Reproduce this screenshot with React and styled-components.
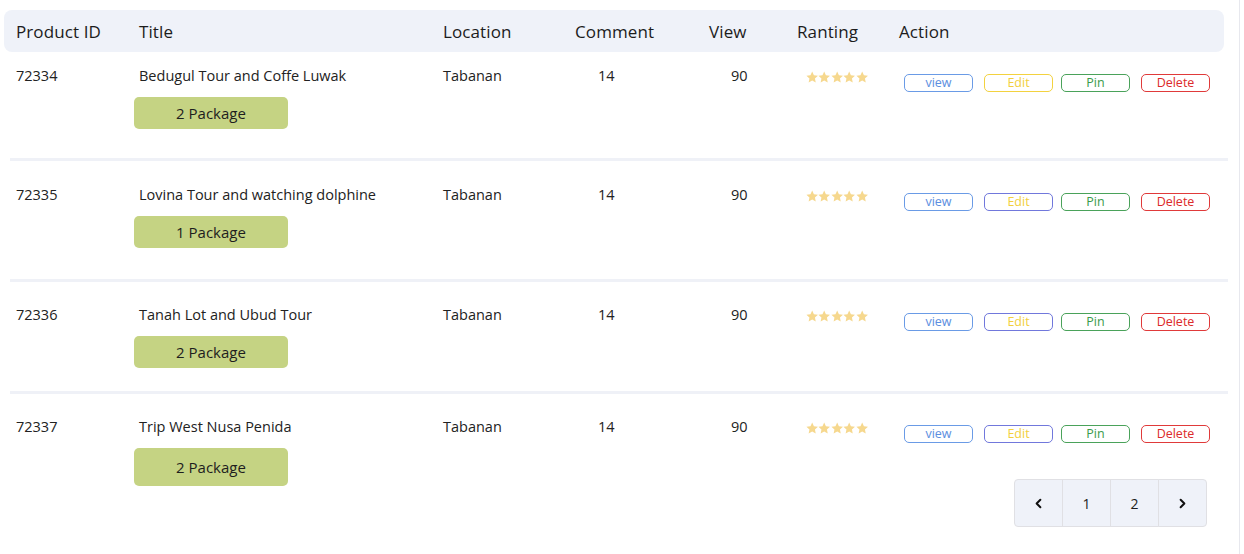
import React from "react";
import styled, { createGlobalStyle } from "styled-components";
import { ChevronLeft, ChevronRight } from "lucide-react";

const GlobalStyle = createGlobalStyle`
  body {
    margin: 0;
    background: #ffffff;
    font-family: "Open Sans", "Liberation Sans", sans-serif;
    color: #1e1e1e;
  }
`;

const products = [
  { id: "72334", title: "Bedugul Tour and Coffe Luwak", pkg: "2 Package", top: 14, bottom: 29, pkgH: 32, editBorder: "#f3d23f" },
  { id: "72335", title: "Lovina Tour and watching dolphine", pkg: "1 Package", top: 24, bottom: 31, pkgH: 32, editBorder: "#7178dc" },
  { id: "72336", title: "Tanah Lot and Ubud Tour", pkg: "2 Package", top: 23, bottom: 23, pkgH: 32, editBorder: "#7178dc" },
  { id: "72337", title: "Trip West Nusa Penida", pkg: "2 Package", top: 23, bottom: 0, pkgH: 38, editBorder: "#7178dc" },
];

const columns = "123px 304px 132px 134px 88px 102px 1fr";

const Home = () => {
  return (
    <Page>
      <GlobalStyle />
      <Table>
        <HeadRow>
          <HeadCell>Product ID</HeadCell>
          <HeadCell>Title</HeadCell>
          <HeadCell>Location</HeadCell>
          <HeadCell>Comment</HeadCell>
          <HeadCell>View</HeadCell>
          <HeadCell>Ranting</HeadCell>
          <HeadCell>Action</HeadCell>
        </HeadRow>
        {products.map((p, i) => (
          <React.Fragment key={p.id}>
            <BodyRow $top={p.top} $bottom={p.bottom}>
              <Cell>{p.id}</Cell>
              <TitleCell>
                <span>{p.title}</span>
                <PackageButton $h={p.pkgH}>{p.pkg}</PackageButton>
              </TitleCell>
              <Cell>Tabanan</Cell>
              <Cell $pl={35}>14</Cell>
              <Cell $pl={34}>90</Cell>
              <Cell $pl={21}>
                <Stars>
                  {[0, 1, 2, 3, 4].map((s) => (
                    <svg key={s} width="12.4" height="12" viewBox="0 0 24 23">
                      <path
                        d="M12 0.8l3.3 7.2 7.9 0.9-5.9 5.4 1.6 7.8L12 18.2l-6.9 3.9 1.6-7.8L0.8 8.9l7.9-0.9z"
                        fill="#f6d88e"
                      />
                    </svg>
                  ))}
                </Stars>
              </Cell>
              <Cell $pl={17}>
                <Actions>
                  <ActionButton $border="#6a9be6" $color="#5b8ee0">view</ActionButton>
                  <ActionButton $border={p.editBorder} $color="#f2cf3c" $ml={11}>Edit</ActionButton>
                  <ActionButton $border="#4aa25a" $color="#3a9a4a" $ml={8}>Pin</ActionButton>
                  <ActionButton $border="#e03a3a" $color="#dc2a2a" $ml={11}>Delete</ActionButton>
                </Actions>
              </Cell>
            </BodyRow>
            {i < products.length - 1 && <Divider />}
          </React.Fragment>
        ))}
      </Table>
      <Pagination>
        <PageItem><ChevronLeft size={15} strokeWidth={3.2} color="#111" /></PageItem>
        <PageItem>1</PageItem>
        <PageItem>2</PageItem>
        <PageItem><ChevronRight size={15} strokeWidth={3.2} color="#111" /></PageItem>
      </Pagination>
    </Page>
  );
};

const Page = styled.div`
  width: 1240px;
  height: 554px;
  border-right: 1px solid #e7e8ee;
  box-sizing: border-box;
  padding: 10px 0 0 4px;
  overflow: hidden;
`;

const Table = styled.div`
  width: 1220px;
`;

const HeadRow = styled.div`
  display: grid;
  grid-template-columns: ${columns};
  align-items: center;
  height: 42px;
  background: #eff2f9;
  border-radius: 8px;
`;

const HeadCell = styled.div`
  padding-left: 12px;
  font-size: 17px;
  color: #1c1c1c;
  letter-spacing: 0.1px;
`;

const BodyRow = styled.div`
  display: grid;
  grid-template-columns: ${columns};
  align-items: start;
  padding-top: ${(p) => p.$top}px;
  padding-bottom: ${(p) => p.$bottom}px;
`;

const Divider = styled.div`
  height: 3px;
  margin: 0 -4px 0 6px;
  background: #eff1f7;
`;

const Cell = styled.div`
  padding-left: ${(p) => p.$pl || 12}px;
  font-size: 14.5px;
  line-height: 20px;
  color: #222;
`;

const TitleCell = styled(Cell)`
  display: flex;
  flex-direction: column;
  align-items: flex-start;
  gap: 11px;
`;

const PackageButton = styled.div`
  width: 154px;
  height: ${(p) => p.$h}px;
  margin-left: -5px;
  background: #c5d383;
  border-radius: 5px;
  display: flex;
  align-items: center;
  justify-content: center;
  font-size: 15px;
  color: #1e1e1e;
`;

const Stars = styled.div`
  display: flex;
  padding-top: 5px;
`;

const Actions = styled.div`
  display: flex;
  padding-top: 8px;
`;

const ActionButton = styled.div`
  width: 67px;
  height: 16px;
  margin-left: ${(p) => p.$ml || 0}px;
  border: 1px solid ${(p) => p.$border};
  color: ${(p) => p.$color};
  border-radius: 5px;
  display: flex;
  align-items: center;
  justify-content: center;
  font-size: 12.5px;
  line-height: 1;
`;

const Pagination = styled.div`
  display: flex;
  justify-content: flex-end;
  margin: -7px 32px 0 0;
`;

const PageItem = styled.div`
  width: 47px;
  height: 46px;
  display: flex;
  align-items: center;
  justify-content: center;
  background: #eff2f9;
  border: 1px solid #e0e0e4;
  margin-left: -1px;
  font-size: 14px;
  color: #1c1c1c;
  &:first-child {
    border-radius: 4px 0 0 4px;
  }
  &:last-child {
    border-radius: 0 4px 4px 0;
  }
`;

export default Home;
